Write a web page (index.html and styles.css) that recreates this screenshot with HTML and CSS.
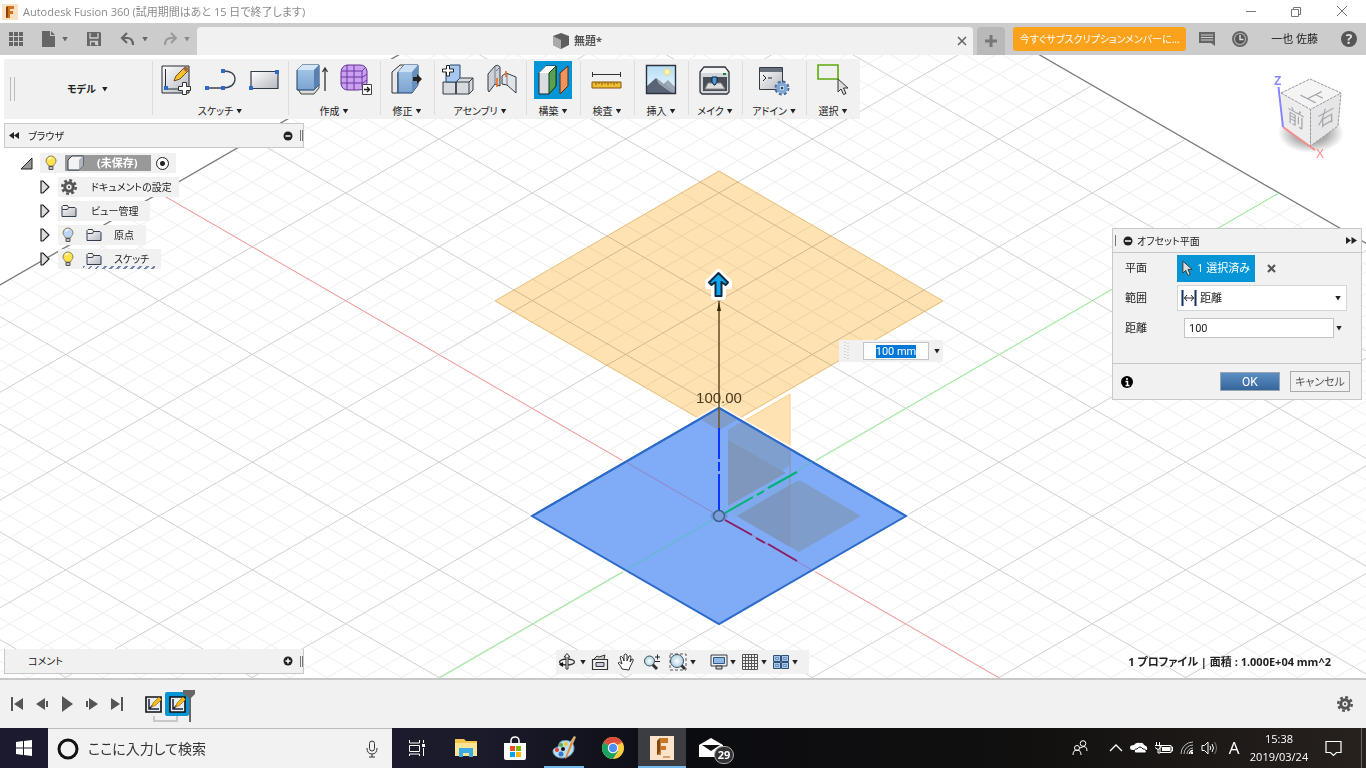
FILE: index.html
```html
<!DOCTYPE html>
<html lang="ja">
  <head>
    <meta charset="UTF-8" />
    <meta name="viewport" content="width=device-width, initial-scale=1.0" />
    <title>Autodesk Fusion 360</title>
    <link rel="stylesheet" href="styles.css">
  </head>

  <body>
    <!-- shared gradients and symbols -->
    <svg class="defs" aria-hidden="true">
      <defs>
        <linearGradient id="gray" x1="0" y1="0" x2="1" y2="1"><stop offset="0" stop-color="#fff" /><stop offset="1" stop-color="#b4b8c0" /></linearGradient>
        <linearGradient id="blue" x1="0" y1="0" x2="0" y2="1"><stop offset="0" stop-color="#a9cbea" /><stop offset="1" stop-color="#7ba3d0" /></linearGradient>
        <linearGradient id="sky" x1="0" y1="0" x2="0" y2="1"><stop offset="0" stop-color="#b5dcf5" /><stop offset="1" stop-color="#eef8fd" /></linearGradient>
        <radialGradient id="lens"><stop offset="0" stop-color="#fff" /><stop offset="1" stop-color="#a8d0e0" /></radialGradient>
        <radialGradient id="shade"><stop offset="0.5" stop-color="#777" stop-opacity="0.6" /><stop offset="1" stop-color="#777" stop-opacity="0" /></radialGradient>
      </defs>
      <symbol id="bulb" viewBox="0 0 12 16">
        <path d="M6 1a5 5 0 0 0-5 5c0 2 2 3 2.500 5h5C9 9 11 8 11 6a5 5 0 0 0-5-5z" fill="currentColor" stroke="#8a8255" />
        <path d="M4 4.500a2.500 2.500 0 0 1 2.500-2" fill="none" stroke="#fff" stroke-width="1.500" />
        <path d="M4 11.500h4v3H4z" fill="#bbb" stroke="#555" />
      </symbol>
      <symbol id="folder" viewBox="0 0 16 14">
        <path d="M1 12.500V2.500l1-1h4.500l1 2H14l1 1v8z" fill="url(#gray)" stroke="#333c4c" />
        <path d="M1.500 5.500h5l1-2" fill="none" stroke="#333c4c" />
      </symbol>
      <symbol id="gear" viewBox="0 0 16 16">
        <circle cx="8" cy="8" r="6.700" fill="none" stroke="currentColor" stroke-width="2.600" stroke-dasharray="2.860 2.400" />
        <circle cx="8" cy="8" r="4.200" fill="none" stroke="currentColor" stroke-width="3" />
        <circle cx="8" cy="8" r="1.200" fill="currentColor" />
      </symbol>
      <symbol id="expand" viewBox="0 0 10 14">
        <path d="M1 1h2l6 6-6 6H1z" fill="#ddd" stroke="#222" stroke-width="1.200" />
      </symbol>
      <symbol id="cursor" viewBox="0 0 12 18">
        <path d="M1 1v13l3-3 2.500 5.500 2.500-1L6.500 10H11z" fill="#ddd" stroke="#333" />
      </symbol>
      <symbol id="feature" viewBox="0 0 17 17">
        <path d="M1 1h15v15H1z" fill="#e4edf8" stroke="#111" stroke-width="1.600" />
        <path d="M4 3v10h10M4 13l4-4" fill="none" stroke="#223" stroke-width="1.500" />
        <path d="M6.500 11l1.500-4 6-6 2.500 2.500-6 6z" fill="#f4b91b" stroke="#a46a08" stroke-width="0.700" />
      </symbol>
    </svg>

    <header class="titlebar">
      <svg class="logo" viewBox="0 0 16 16"><path d="M0 0h16v16H0z" fill="#fbe2c4" /><path d="M4 14V3l2-1h6v3H8v2h3v3H8v4z" fill="#d1731b" /><path d="M4 3l2-1v11l-2 1z" fill="#8e4208" /></svg>
      <h1 class="app-title">Autodesk Fusion 360 (試用期間はあと 15 日で終了します)</h1>
      <div class="window-buttons">
        <button aria-label="最小化"><svg width="12" height="12"><path d="M1 5.500h10" stroke="#777" /></svg></button>
        <button aria-label="元に戻す"><svg width="12" height="12" fill="none" stroke="#777"><path d="M.5 3.500h7v7h-7zM2.500 3V1.500h7v7H8" /></svg></button>
        <button aria-label="閉じる"><svg width="12" height="12"><path d="M0 0l10 10M10 0L0 10" stroke="#777" /></svg></button>
      </div>
    </header>

    <nav class="tabbar">
      <div class="quick">
        <button aria-label="データ"><svg width="16" height="16" fill="#666"><path d="M1 1h4v4H1zM6 1h4v4H6zM11 1h4v4h-4zM1 6h4v4H1zM6 6h4v4H6zM11 6h4v4h-4zM1 11h4v4H1zM6 11h4v4H6zM11 11h4v4h-4z" /></svg></button>
        <button class="quick-file" aria-label="ファイル"><svg width="16" height="18" fill="#666"><path d="M2 1h8v5h5v11H2zM11 1l4 4h-4z" /></svg><i class="caret"></i></button>
        <button class="quick-save" aria-label="保存"><svg width="16" height="16"><path d="M1 1h13l1 1v13H1z" fill="#666" /><path d="M4 2v5h8V2M4.500 14.500v-4h7v4" fill="none" stroke="#ccc" stroke-width="1.300" /><path d="M9 11h2v3H9z" fill="#ccc" /></svg></button>
        <button class="quick-undo" aria-label="元に戻す"><svg width="16" height="16"><path d="M7 2L2 7l5 5M3 7h4q6 0 6 7" fill="none" stroke="#666" stroke-width="2.200" /></svg><i class="caret"></i></button>
        <button class="quick-redo" aria-label="やり直し"><svg width="16" height="16"><path d="M9 2l5 5-5 5M13 7H9q-6 0-6 7" fill="none" stroke="#999" stroke-width="2" /></svg><i class="caret"></i></button>
      </div>
      <div class="tab">
        <svg width="16" height="17"><path d="M0 3l8-3 8 3v9l-8 4-8-4z" fill="#5e5e5e" /><path d="M0 3l8 4v9l-8-4z" fill="#aaa" /></svg>
        <b>無題*</b>
        <button class="tab-close" aria-label="タブを閉じる"><svg width="10" height="10"><path d="M1 1l8 8M9 1L1 9" stroke="#666" stroke-width="1.600" /></svg></button>
      </div>
      <button class="tab-new" aria-label="新規"><svg width="14" height="14"><path d="M7 1v12M1 7h12" stroke="#777" stroke-width="3" /></svg></button>
      <button class="subscribe">今すぐサブスクリプションメンバーに...</button>
      <div class="account">
        <button aria-label="コメント"><svg width="18" height="16"><path d="M1 1h16v14l-4-3H1z" fill="#666" /><path d="M3 4h12M3 6.500h12M3 9h12" stroke="#ccc" /></svg></button>
        <button aria-label="ジョブ"><svg width="16" height="16"><circle cx="8" cy="8" r="7" fill="#bbb" stroke="#666" stroke-width="2" /><circle cx="8" cy="8" r="5" fill="#555" /><path d="M8 4v4.500h3.500" fill="none" stroke="#ddd" stroke-width="1.500" /></svg></button>
        <a href="#" class="user">一也 佐藤</a>
        <button class="help" aria-label="ヘルプ">?</button>
      </div>
    </nav>

    <main class="viewport">
      <svg class="scene" viewBox="0 55 1366 623" preserveAspectRatio="xMidYMid slice">
        <g fill="none">
          <path id="minor" stroke="#eee" />
          <path id="major" stroke="#d0d0d0" />
          <path d="M-400 516L719 -130L1839 516" stroke="#808080" stroke-width="1.300" />
          <path d="M159 193L1200 794" stroke="#ff9c9c" />
          <path d="M1279 193L239 794" stroke="#96f596" />
        </g>

        <!-- offset preview plane -->
        <path class="plane" d="M719 171L943 301L719 430L495 301z" />
        <path d="M728 430L790 394V466L728 502z" fill="#ffe2b1" stroke="#fff" stroke-width="4" />
        <path d="M728 430L790 394V466L728 502z" fill="#ffe2b1" stroke="#f9cf8c" />

        <!-- selected sketch profile -->
        <path d="M532 516L719 408L906 516L719 624z" fill="none" stroke="#fff" stroke-width="6" opacity="0.700" />
        <path d="M532 516L719 408L906 516L719 624z" fill="#76a6f6" fill-opacity="0.930" stroke="#2c6bc9" stroke-width="2" />
        <g clip-path="url(#profile)">
          <path d="M719 300L943 301L719 430L495 301z" fill="#7f9ccb" />
          <path d="M728 430L790 394V464L786 468L728 502z" fill="#7f9fcf" />
          <path d="M728 440L786 473L728 506z" fill="#7e97bb" />
          <path d="M790 476V547L728 512V505z" fill="#7fa5e2" opacity="0.500" />
          <path d="M737 516L795 482Q799 479 803 482L861 516L799 552z" fill="#7f9dca" />
          <path d="M737 516L790 485V547z" fill="#7c98c2" />
          <path d="M790 450V547" stroke="#8794a4" />
        </g>
        <clipPath id="profile"><path d="M534 516L719 409L904 516L719 623z" /></clipPath>
        <path d="M532 516L719 408L906 516" fill="none" stroke="#2c6bc9" stroke-width="2" />
        <path d="M626 462L719 516L812 570" stroke="#9b6fb0" fill="none" opacity="0.600" />
        <path d="M626 570L812 462" stroke="#4ec8b0" opacity="0.700" />
        <path d="M725 520L752 535M756 538L765 543M768 544L797 561" stroke="#8b1c62" stroke-width="2" />
        <path d="M725 513L753 497M757 495L764 491M768 488L797 472" stroke="#00b27a" stroke-width="2" />
        <path d="M719 301V428" stroke="#6f572d" stroke-width="1.600" />
        <path d="M719 428V459M719 462V471M719 474V512" stroke="#0a35ff" stroke-width="2" />
        <path d="M719 302l-2 9h4z" fill="#332200" />
        <circle cx="719" cy="516" r="5.500" fill="#8cb0ee" stroke="#35598f" stroke-width="1.500" />
        <ellipse cx="719" cy="516" rx="9" ry="5" fill="#57749f" opacity="0.300" />
        <text class="dimension" x="719" y="403">100.00</text>
        <path d="M718.500 272L708 282V286H714V297H723V286H729V282z" fill="#fff" stroke="#fff" stroke-width="6" stroke-linejoin="round" />
        <path d="M718.500 273L709 282.500L711.500 285L715.500 282V296H721.500V282L725.500 285L728 282.500z" fill="#0ea5ee" stroke="#102b3c" stroke-width="2" stroke-linejoin="round" />
      </svg>

      <div class="float-left">
        <section class="ribbon">
          <div class="workspace"><span class="grip"></span><button class="menu"><b>モデル</b><i class="caret"></i></button></div>
          <div class="group">
            <div class="tools">
              <button aria-label="スケッチを作成"><svg viewBox="0 0 32 32"><path d="M2 2h27v27H2z" fill="url(#gray)" stroke="#252b35" /><path d="M5.500 5v20H25" fill="none" stroke="#252b35" /><path d="M4 22h4v4H4z" fill="#2a6bd0" /><path d="M14 17l2-5L25 3l3.500 3.500L20 15z" fill="#f5c22d" stroke="#7a4c12" /><path d="M23 5l3-3 3 3-3 3z" fill="#a46b45" /><path d="M22.500 18.500h4v4h4v4h-4v4h-4v-4h-4v-4h4z" fill="#fff" stroke="#333" /></svg></button>
              <button aria-label="線分"><svg viewBox="0 0 32 32"><path d="M3 24h16M19 7c8 0 12 3 12 8s-4 9-12 9" fill="none" stroke="#3b4450" stroke-width="1.300" /><path d="M1 22h4v4H1zM17 22h4v4h-4zM17 5h4v4h-4z" fill="#3068cc" /></svg></button>
              <button aria-label="長方形"><svg viewBox="0 0 32 32"><path d="M3 7.500h27v17H3z" fill="url(#gray)" stroke="#323a48" stroke-width="1.200" /><path d="M1 22h4v4H1zM27 6h4v4h-4z" fill="#3068cc" /></svg></button>
            </div>
            <button class="menu">スケッチ<i class="caret"></i></button>
          </div>
          <div class="group">
            <div class="tools">
              <button aria-label="押し出し"><svg viewBox="0 0 32 32"><path d="M2 25l3 5h13l5-6v-4H2z" fill="#ddd" stroke="#444" /><path d="M1 6l5-5h17v20l-5 5H1z" fill="url(#blue)" stroke="#1c3c66" /><path d="M1 6l5-5h17l-5 5z" fill="#d3e7f7" /><path d="M18 6l5-5v20l-5 5z" fill="#5581b5" /><path d="M29 27V5M26.500 8L29 4l2.500 4" fill="none" stroke="#333" stroke-width="1.300" /></svg></button>
              <button aria-label="フォームを作成"><svg viewBox="0 0 32 32"><path d="M7 1h13q6 0 7 6v11q0 8-9 8H8q-6 0-7-6V9q0-7 6-8z" fill="#c8a1f3" stroke="#653090" /><path d="M2 7h20v16M1 13h22l4-3M1 19h22l4-3M7 1v25M14 1v25M22 7l4-4" fill="none" stroke="#6f35a0" /><path d="M22.500 20.500h9v10h-9z" fill="#fff" stroke="#444" /><path d="M24 25.500h5M27 23l2.500 2.500L27 28" fill="none" stroke="#222" stroke-width="1.400" /></svg></button>
            </div>
            <button class="menu">作成<i class="caret"></i></button>
          </div>
          <div class="group">
            <div class="tools"><button aria-label="プレス/プル"><svg viewBox="0 0 32 32"><path d="M1 8l8-7h4L7 9v20H1z" fill="#e8e8ec" stroke="#333" /><path d="M7 8l6-7h14v20l-6 8H7z" fill="url(#blue)" stroke="#1c3c66" /><path d="M7 8l6-7h14l-6 7z" fill="#cce2f4" /><path d="M21 8l6-7v20l-6 8z" fill="#6890bd" /><path d="M22 13h4v-3l5 5-5 5v-3h-4z" fill="#222" /></svg></button></div>
            <button class="menu">修正<i class="caret"></i></button>
          </div>
          <div class="group">
            <div class="tools">
              <button aria-label="新規コンポーネント"><svg viewBox="0 0 32 32"><path d="M1 18h13v12H1zM14 18l4-4h13v12l-4 4H14z" fill="#d7dade" stroke="#343a44" /><path d="M14 18h13l4-4M27 18v12M14 18v12" fill="none" stroke="#343a44" /><path d="M4 5l4-4h10v13l-4 4H4z" fill="#a7c8ee" stroke="#27456f" /><path d="M4.500 1.500h3v3.500h4v3h-4v4h-3V8h-4V5h4z" fill="#fff" stroke="#222" /></svg></button>
              <button aria-label="ジョイント"><svg viewBox="0 0 32 32"><path d="M2 10l7-8q3-2 5 1v19l-5-2-6 8-1-2z" fill="#cdd1d7" stroke="#343a44" /><path d="M9 3v17M14 3l-4 4" fill="none" stroke="#767d88" /><path d="M16 12l4-3 10 4v16l-9-8-5-1z" fill="#e1e4e8" stroke="#343a44" /><path d="M21 10v11" fill="none" stroke="#767d88" /><path d="M11 14v9M20 7v6" stroke="#f06b16" stroke-width="1.600" /></svg></button>
            </div>
            <button class="menu">アセンブリ<i class="caret"></i></button>
          </div>
          <div class="group">
            <div class="tools"><button class="active" aria-label="オフセット平面"><svg viewBox="0 0 32 32"><path d="M2 9l7-7h10v20l-7 8H2z" fill="#d9dce0" stroke="#222" /><path d="M2 9l7-7h10l-7 7z" fill="#fff" /><path d="M12 9l7-7v20l-7 8z" fill="#58a052" stroke="#143b16" /><path d="M23 9l8-7v20l-8 8z" fill="#ef935f" stroke="#54270c" /></svg></button></div>
            <button class="menu">構築<i class="caret"></i></button>
          </div>
          <div class="group">
            <div class="tools"><button aria-label="計測"><svg viewBox="0 0 32 32"><path d="M1.500 8v5M29.500 8v5M1 10.500h28" stroke="#333" /><path d="M1 18h29v6H1z" fill="#efbd30" stroke="#81570f" /><path d="M5 18v3M8 18v2M11 18v3M14 18v2M17 18v3M20 18v2M23 18v3M26 18v2" stroke="#81570f" /></svg></button></div>
            <button class="menu">検査<i class="caret"></i></button>
          </div>
          <div class="group">
            <div class="tools"><button aria-label="下絵"><svg viewBox="0 0 32 32"><path d="M1.500 1.500h29v28h-29z" fill="url(#sky)" /><circle cx="22" cy="8" r="3" fill="#fff5b0" stroke="#f8db73" /><path d="M14 24l9-8 7 7v6H14z" fill="#9ba9b7" /><path d="M2 22l9-8 19 15H2z" fill="#5b6477" /><path d="M11 14l3 6 13 9h3z" fill="#99a2b1" /><path d="M1.500 1.500h29v28h-29z" fill="none" stroke="#2c3340" stroke-width="1.400" /></svg></button></div>
            <button class="menu">挿入<i class="caret"></i></button>
          </div>
          <div class="group">
            <div class="tools"><button aria-label="3D プリント"><svg viewBox="0 0 32 32"><path d="M1 8l4-5h21l4 5v20l-2 2H3l-2-2z" fill="#d3d6da" stroke="#30353e" stroke-width="1.300" /><path d="M5 4h21l3 5H2z" fill="#f3f3f3" /><path d="M4 13h24v14H4z" fill="#484d56" /><path d="M9 19h13l4 6H6z" fill="#ddd" stroke="#888" /><path d="M13 13h5v5l-2 3h-1l-2-3z" fill="#4c9be0" stroke="#123" /><path d="M24 9h3v2h-3z" fill="#158a21" /></svg></button></div>
            <button class="menu">メイク<i class="caret"></i></button>
          </div>
          <div class="group wide">
            <div class="tools"><button aria-label="スクリプトとアドイン"><svg viewBox="0 0 32 32"><path d="M1.500 3.500h23v22h-23z" fill="url(#gray)" stroke="#343b48" /><path d="M2 4h22v4H2z" fill="#66707d" /><path d="M5 11l3 3-3 3M10 14h4" fill="none" stroke="#222" /><circle cx="24" cy="24" r="6" fill="none" stroke="#486e9f" stroke-width="3" stroke-dasharray="2.700 2" /><circle cx="24" cy="24" r="4" fill="#fff" stroke="#7fa7d4" stroke-width="3.500" /><circle cx="24" cy="24" r="1.500" fill="#23466f" /></svg></button></div>
            <button class="menu">アドイン<i class="caret"></i></button>
          </div>
          <div class="group">
            <div class="tools"><button aria-label="選択"><svg viewBox="0 0 32 32"><path d="M1 1h20v14H1z" fill="none" stroke="#5fa80c" stroke-width="1.600" /><use href="#cursor" x="20" y="14" width="12" height="18" /></svg></button></div>
            <button class="menu">選択<i class="caret"></i></button>
          </div>
        </section>

        <section class="panel-head browser">
          <svg width="11" height="7"><path d="M5 0v7L0 3.500zM10 0v7L5 3.500z" fill="#222" /></svg>
          <h2>ブラウザ</h2>
          <button class="round" aria-label="折りたたむ"><svg width="10" height="10"><circle cx="5" cy="5" r="4.500" fill="#222" /><path d="M2.500 5h5" stroke="#fff" stroke-width="1.500" /></svg></button>
          <span class="grip small"></span>
        </section>

        <ul class="tree">
          <li class="root">
            <svg width="13" height="13"><path d="M1 12L12 1v11z" fill="#999" stroke="#222" /></svg>
            <div class="node">
              <svg class="bulb on"><use href="#bulb" /></svg>
              <span class="document"><svg width="17" height="16"><path d="M1 5l4-4h11v10l-4 4H1z" fill="#f2f3f5" stroke="#333c4c" /><path d="M12 5l4-4v10l-4 4z" fill="#aeb3bc" /></svg><b>(未保存)</b></span>
              <input type="radio" class="activate" aria-label="アクティブ化" checked>
            </div>
          </li>
          <li><svg class="expand"><use href="#expand" /></svg><div class="node settings"><svg class="cog"><use href="#gear" /></svg><span>ドキュメントの設定</span></div></li>
          <li><svg class="expand"><use href="#expand" /></svg><div class="node views"><svg class="folder"><use href="#folder" /></svg><span>ビュー管理</span></div></li>
          <li><svg class="expand"><use href="#expand" /></svg><div class="node nested"><svg class="bulb off"><use href="#bulb" /></svg><svg class="folder"><use href="#folder" /></svg><span>原点</span></div></li>
          <li><svg class="expand"><use href="#expand" /></svg><div class="node nested dashed"><svg class="bulb on"><use href="#bulb" /></svg><svg class="folder"><use href="#folder" /></svg><span>スケッチ</span></div></li>
        </ul>
      </div>

      <svg class="viewcube" viewBox="1268 70 80 92">
        <ellipse cx="1311" cy="133" rx="33" ry="20" fill="url(#shade)" />
        <path d="M1310 79L1341 93L1310.500 109.500L1281 93z" fill="#f4f4f5" />
        <path d="M1281 93L1310.500 109.500V146L1283 127z" fill="#ededee" />
        <path d="M1341 93L1310.500 109.500V146L1338 126z" fill="#e6e6e8" />
        <path d="M1281 93L1310 79L1341 93L1338 126L1310.500 146V109.500M1281 93L1310.500 109.500L1341 93" fill="none" stroke="#999" stroke-dasharray="3 1" />
        <path d="M1278.500 87L1283 127" stroke="#8585ff" stroke-width="2" />
        <path d="M1283 127L1315 150" stroke="#f58d8d" stroke-width="2" />
        <g class="faces">
          <text transform="matrix(0.9 0.45 -0.9 0.45 1308 99)">上</text>
          <text transform="matrix(0.9 0.5 0 1 1296 125)">前</text>
          <text transform="matrix(0.9 -0.5 0 1 1326 124)">右</text>
        </g>
        <text x="1274" y="85" class="axis-z">Z</text>
        <text x="1316" y="158" class="axis-x">X</text>
      </svg>

      <div class="value-box">
        <svg width="5" height="18"><path d="M1 0v18M4 1v18" stroke="#bbb" stroke-dasharray="1 2" /></svg>
        <input type="text" class="value" value="100 mm" aria-label="距離">
        <button aria-label="候補"><i class="caret"></i></button>
      </div>

      <form class="dialog">
        <header>
          <span class="grip small"></span>
          <svg width="10" height="10"><circle cx="5" cy="5" r="4.500" fill="#222" /><path d="M2 5h6" stroke="#fff" stroke-width="1.500" /></svg>
          <h2>オフセット平面</h2>
          <svg class="skip" width="11" height="7"><path d="M0 0v7l5-3.500zM5.500 0v7L11 3.500z" fill="#222" /></svg>
        </header>
        <div class="fields">
          <div class="field">
            <label for="plane">平面</label>
            <button type="button" id="plane" class="picked"><svg width="11" height="17"><use href="#cursor" /></svg>1 選択済み</button>
            <button type="button" aria-label="クリア" class="clear"><svg width="9" height="9"><path d="M1 1l7 7M8 1L1 8" stroke="#555" stroke-width="2.200" /></svg></button>
          </div>
          <div class="field">
            <label for="extent">範囲</label>
            <div class="select">
              <svg width="16" height="16"><path d="M1.500 0v16M14.500 0v16" stroke="#13305e" stroke-width="2" /><path d="M3 8h10M6 5L3.500 8 6 11M10 5l2.500 3L10 11" fill="none" stroke="#222" /></svg>
              <select id="extent"><option>距離</option></select>
              <i class="caret"></i>
            </div>
          </div>
          <div class="field">
            <label for="distance">距離</label>
            <input type="text" id="distance" value="100">
            <i class="caret"></i>
          </div>
        </div>
        <footer>
          <svg width="12" height="12"><circle cx="6" cy="6" r="6" /><path d="M6 2v2M4.500 5.500H6.500V9M4.500 9.500h4" stroke="#fff" stroke-width="1.500" fill="none" /></svg>
          <button type="button" class="ok">OK</button>
          <button type="button" class="cancel">キャンセル</button>
        </footer>
      </form>

      <section class="panel-head comments">
        <h2>コメント</h2>
        <button class="round" aria-label="展開"><svg width="10" height="10"><circle cx="5" cy="5" r="4.500" fill="#222" /><path d="M2.500 5h5M5 2.500v5" stroke="#fff" stroke-width="1.500" /></svg></button>
        <span class="grip small"></span>
      </section>

      <div class="navbar">
        <button class="orbit" aria-label="オービット"><svg viewBox="0 0 18 18"><ellipse cx="9" cy="9" rx="7.500" ry="3" fill="none" stroke="#333" stroke-width="1.300" /><path d="M8 16V4H6l3-3.500L12 4h-2v12z" fill="#eee" stroke="#333" /><path d="M5 9v5l-4-2.500z" fill="#111" /></svg><i class="caret"></i></button>
        <button aria-label="ビュー正面"><svg viewBox="0 0 18 18"><path d="M1.500 6.500h15v10h-15z" fill="#f1f1f1" stroke="#333" stroke-width="1.200" /><path d="M3 6l3-3 2 1 6-2-1 4" fill="#ccc" stroke="#333" /><path d="M5 9.500h8v4H5z" fill="#ccd" stroke="#333" /></svg></button>
        <button aria-label="画面移動"><svg viewBox="0 0 18 18"><path d="M5 16q-1-3-4-6 1-2 4 1L3 4q1-2 3 1l1 3V2q2-2 3 0v6l2-5q2-1 2 1l-1 5 2-3q2 0 1 2l-3 6-1 3z" fill="#fff" stroke="#333" /></svg></button>
        <button aria-label="ズーム"><svg viewBox="0 0 18 18"><path d="M9 11l5 5" stroke="#333" stroke-width="3" /><circle cx="6.500" cy="8" r="5" fill="url(#lens)" stroke="#40505c" /><path d="M12 4h5M14.500 1.500v5M12 8.500h5" stroke="#222" /></svg></button>
        <button class="gap" aria-label="窓ズーム"><svg viewBox="0 0 18 18"><path d="M1 1h16v16H1z" fill="none" stroke="#555" stroke-dasharray="3 2" /><path d="M12 12l4 4" stroke="#333" stroke-width="3" /><circle cx="8" cy="8" r="6.500" fill="url(#lens)" stroke="#40505c" /></svg><i class="caret"></i></button>
        <button aria-label="表示設定"><svg viewBox="0 0 18 18"><path d="M1 2h16v11H1z" fill="#eee" stroke="#333c4c" /><path d="M3.500 4.500h11v6h-11z" fill="#92b8e6" stroke="#2f5788" /><path d="M6 13h6v3H6z" fill="#ccc" stroke="#333" /></svg><i class="caret"></i></button>
        <button aria-label="グリッド"><svg viewBox="0 0 18 18"><path d="M1.500 1.500h15v15h-15zM4.500 1v15M7.500 1v15M10.500 1v15M13.500 1v15M1 4.500h15M1 7.500h15M1 10.500h15M1 13.500h15" fill="none" stroke="#555" /></svg><i class="caret"></i></button>
        <button aria-label="ビューポート"><svg viewBox="0 0 18 18" fill="#a9c8ee" stroke="#2f5178"><path d="M1.500 2.500h7v6h-7zM9.500 2.500h7v6h-7zM1.500 9.500h7v6h-7zM9.500 9.500h7v6h-7z" /><path d="M3.500 4.500h3v2h-3zM11.500 4.500h3v2h-3zM3.500 11.500h3v2h-3zM11.500 11.500h3v2h-3z" stroke="#6a8fc0" /></svg><i class="caret"></i></button>
      </div>

      <p class="status">1 プロファイル | 面積 : 1.000E+04 mm^2</p>
    </main>

    <section class="timeline">
      <div class="playback">
        <button aria-label="先頭"><svg width="14" height="16"><path d="M1 1h2v14H1zM13 2v12L4 8z" fill="#555" /></svg></button>
        <button aria-label="前へ"><svg width="14" height="16"><path d="M10 2v12L1 8zM11 5h2v6h-2z" fill="#555" /></svg></button>
        <button aria-label="再生"><svg width="14" height="16"><path d="M2 0v16l11-8z" fill="#555" /></svg></button>
        <button aria-label="次へ"><svg width="14" height="16"><path d="M4 2v12l9-6zM1 5h2v6H1z" fill="#555" /></svg></button>
        <button aria-label="末尾"><svg width="14" height="16"><path d="M1 2v12l9-6zM11 1h2v14h-2z" fill="#555" /></svg></button>
      </div>
      <div class="features">
        <button aria-label="スケッチ1"><svg width="17" height="17"><use href="#feature" /></svg></button>
        <button class="current" aria-label="スケッチ2"><svg width="17" height="17"><use href="#feature" /></svg></button>
        <svg class="marker" width="13" height="32"><path d="M0 0h12v4L8 8v24H6V8L0 4z" fill="#666" /></svg>
        <span class="link"></span>
      </div>
      <button class="timeline-settings" aria-label="設定"><svg class="cog"><use href="#gear" /></svg></button>
    </section>

    <footer class="taskbar">
      <button class="start" aria-label="スタート"><svg width="16" height="16" fill="#fff"><path d="M0 2l7-1v6.500H0zM8 1l8-1v7.500H8zM0 8.500h7V15l-7-1zM8 8.500h8V16l-8-1z" /></svg></button>
      <div class="search">
        <svg width="22" height="22"><circle cx="11" cy="11" r="9" fill="none" stroke="#111" stroke-width="3" /></svg>
        <input type="text" placeholder="ここに入力して検索" aria-label="検索">
        <svg width="12" height="18"><path d="M6 1q2.500 0 2.500 2.500v5Q8.500 11 6 11T3.500 8.500v-5Q3.500 1 6 1zM1 8q0 6 5 6t5-6M6 14v3M3 17h6" fill="none" stroke="#333" /></svg>
      </div>
      <div class="apps">
        <button aria-label="タスクビュー"><svg width="18" height="16" fill="none" stroke="#fff"><path d="M1.500 0v3h10V0M1.500 5.500h10v6h-10zM1.500 16v-2h10v2M15.500 0v3M15.500 8v8" /><path d="M14 4h3v3h-3z" fill="#fff" stroke="none" /></svg></button>
        <button aria-label="エクスプローラー"><svg width="22" height="20"><path d="M0 1h9l2 2h11v14H0z" fill="#f4c54c" /><path d="M0 5h22v13H0z" fill="#ffe593" /><path d="M4 19v-9h14v9h-4v-4H8v4z" fill="#3aabe6" /></svg></button>
        <button aria-label="ストア"><svg width="24" height="24"><path d="M8 7V5q0-4 4-4t4 4v2" fill="none" stroke="#fff" stroke-width="1.500" /><path d="M1 7h22v15q0 2-2 2H3q-2 0-2-2z" fill="#fff" /><path d="M7 10h5v5H7z" fill="#f25022" /><path d="M13 10h5v5h-5z" fill="#7fba00" /><path d="M7 16h5v5H7z" fill="#00a4ef" /><path d="M13 16h5v5h-5z" fill="#ffb900" /></svg></button>
        <button class="running" aria-label="ペイント"><svg width="24" height="24"><path d="M10 5c7-2 12 2 12 7 0 6-6 10-12 10-5 0-9-3-9-7 0-3 3-3 5-4 1-2 1-5 4-6z" fill="#b9def0" stroke="#6e9db6" /><circle cx="5" cy="14" r="2" fill="#e63b31" /><circle cx="9" cy="9" r="2" fill="#5aa840" /><circle cx="14" cy="8" r="2" fill="#f2c42f" /><circle cx="9" cy="18" r="2.500" fill="#3577d0" /><circle cx="11" cy="13" r="2" fill="#111" /><path d="M13 22l6-16 2 1-7 16z" fill="#e3872a" /><path d="M18 6l4-6 2 1-3 7z" fill="#d6b07c" /></svg></button>
        <button aria-label="Chrome"><svg width="24" height="24"><circle cx="12" cy="12" r="11" fill="#ffcd40" /><path d="M12 12L2.500 6.500A11 11 0 0 1 21.500 6.500H12z" fill="#dc4b3e" /><path d="M2.500 6.500A11 11 0 0 0 12 23l5-8-5-3z" fill="#1ba160" /><path d="M21.500 6.500H12v4z" fill="#dc4b3e" /><circle cx="12" cy="12" r="5.200" fill="#fff" /><circle cx="12" cy="12" r="4.200" fill="#4d8ff5" /></svg></button>
        <button class="running open" aria-label="Fusion 360"><svg width="24" height="24"><path d="M0 0h24v24H0z" fill="#fce3cc" /><path d="M7 19V5l3-3h8v5h-7v3h5v4h-5v5z" fill="#c97729" /><path d="M7 5l3-3v14l-3 3z" fill="#85480f" /><path d="M13 21h7" stroke="#d9a06c" stroke-width="2" /></svg></button>
        <button class="mail" aria-label="メール"><svg width="24" height="20"><path d="M0 7l12-7 12 7v12H0z" fill="#fff" /><path d="M3 7h18l-9 6z" fill="#111" /></svg><span class="count">29</span></button>
      </div>
      <div class="tray">
        <button aria-label="People"><svg width="16" height="16" fill="none" stroke="#fff"><circle cx="11" cy="3.500" r="2.800" /><circle cx="5" cy="8" r="2.500" /><path d="M1 15q0-5 4-5t4 5M8 8q7-4 7 3" /></svg></button>
        <button class="more" aria-label="隠れているインジケーター"><svg width="14" height="8"><path d="M1 7l6-6 6 6" fill="none" stroke="#fff" stroke-width="1.300" /></svg></button>
        <button aria-label="OneDrive"><svg width="18" height="12"><path d="M3 8Q0 8 0 5.500T4 3q2-3 6-2 3-1 4 2 4 1 3 5z" fill="#fff" /><path d="M5 11q-2-4 2-4 3-4 6 0 4 0 3 4z" fill="#fff" stroke="#111" /></svg></button>
        <button aria-label="電源"><svg width="18" height="12"><path d="M5 3.500h11v7H5zM16 5h1.500v4H16" fill="none" stroke="#fff" /><path d="M7 5h8v4H7z" fill="#fff" /><path d="M1.500 0v3M4.500 0v3M0 3.500h6v2L3 7.500 0 5.500M3 7v4h2" fill="none" stroke="#fff" /></svg></button>
        <button aria-label="ネットワーク"><svg width="14" height="14" fill="none"><path d="M1 13A12 12 0 0 1 13 1M4 13a9 9 0 0 1 9-9M7 13a6 6 0 0 1 6-6" stroke="#bbb" /><path d="M9.500 13a3.500 3.500 0 0 1 3.500-3.500" stroke="#fff" stroke-width="1.500" /><path d="M11 11h2v2h-2z" fill="#fff" /></svg></button>
        <button aria-label="音量"><svg width="18" height="14" fill="none" stroke="#fff"><path d="M1 4.500h2.500L7 1v12L3.500 9.500H1zM9 5q1.500 2 0 4M11 3q3 4 0 8" /><path d="M13.500 1q4 6 0 12" stroke="#777" /></svg></button>
        <button class="ime">A</button>
        <button class="clock"><time>15:38</time><time>2019/03/24</time></button>
        <button class="notice" aria-label="通知"><svg width="18" height="17"><path d="M1 1.500h15v11h-4.500L8.500 15.500l-3-3H1z" fill="none" stroke="#fff" stroke-width="1.200" /></svg></button>
      </div>
    </footer>

    <!-- JS -->
    <script>
      // isometric ground grid, 10 mm cells with a heavier line every 50 mm
      const cells = 30;
      const stepX = 18.667;
      const stepY = 10.77;
      const w = cells * stepX;
      const h = cells * stepY;
      let minor = '';
      let major = '';

      for (let i = -cells; i <= cells; i++) {
        const left = 719 + i * stepX;
        const right = 719 - i * stepX;
        const y = 516 + i * stepY;
        const lines =
          `M${left - w} ${y + h}L${left + w} ${y - h}` +
          `M${right - w} ${y - h}L${right + w} ${y + h}`;

        if (i % 5 === 0) major += lines;
        else minor += lines;
      }

      document.querySelector('#minor').setAttribute('d', minor);
      document.querySelector('#major').setAttribute('d', major);

      const value = document.querySelector('.value');
      value.focus();
      value.select();
    </script>
  </body>
</html>
```
FILE: styles.css
```css
* {
  margin: 0;
  padding: 0;
  box-sizing: border-box;
}
body {
  display: flex;
  flex-direction: column;
  height: 100vh;
  overflow: hidden;
  background: #f1f1f1;
  color: #222;
  font-family: "Open Sans", "Noto Sans CJK JP", sans-serif;
  font-size: 11px;
  font-feature-settings: "palt";
  line-height: 16px;
}
button,
input,
select {
  border: none;
  outline: none;
  background: none;
  color: inherit;
  font: inherit;
  font-feature-settings: inherit;
}
button {
  display: flex;
  align-items: center;
  justify-content: center;
}
h1,
h2 {
  font-size: 10px;
  font-weight: normal;
}
a {
  color: inherit;
  text-decoration: none;
}
svg {
  display: block;
  flex-shrink: 0;
}
.defs {
  position: absolute;
  width: 0;
  height: 0;
}
.caret {
  flex-shrink: 0;
  width: 6px;
  height: 5px;
  background: currentColor;
  clip-path: polygon(0 0, 100% 0, 50% 100%);
}
.grip {
  width: 5px;
  height: 24px;
  border: solid #bbb;
  border-width: 0 1px;
}
.grip.small {
  width: 3px;
  height: 11px;
  border-color: #777;
}

/* title bar */
.titlebar {
  display: flex;
  align-items: center;
  gap: 5px;
  height: 23px;
  padding-left: 2px;
  background: #fff;
}
.logo {
  width: 16px;
  height: 16px;
}
.app-title {
  color: #8a8a8a;
  font-size: 11px;
}
.window-buttons {
  display: flex;
  margin-left: auto;
}
.window-buttons button {
  width: 46px;
  height: 23px;
}

/* tabs */
.tabbar {
  display: flex;
  align-items: flex-end;
  height: 32px;
  background: #ccc;
}
.quick {
  display: flex;
  align-items: center;
  gap: 18px;
  width: 197px;
  height: 32px;
  padding-left: 8px;
  color: #666;
}
.quick button {
  gap: 6px;
}
.quick .quick-file {
  margin-left: -2px;
}
.quick .quick-undo {
  margin-right: -4px;
}
.quick .quick-redo {
  color: #888;
}
.tab {
  display: flex;
  flex: 1;
  align-items: center;
  justify-content: center;
  gap: 5px;
  height: 28px;
  padding: 0 6px;
  border-radius: 4px 4px 0 0;
  background: #f1f1f1;
  color: #555;
}
.tab svg:first-child {
  margin-left: auto;
}
.tab-close {
  margin-left: auto;
}
.tab-new {
  width: 28px;
  height: 28px;
  margin-left: 4px;
  border-radius: 4px 4px 0 0;
  background: #b9b9b9;
}
.subscribe {
  width: 173px;
  height: 24px;
  margin: 0 12px 4px 8px;
  border-radius: 3px;
  background: #faa21b;
  color: #fff;
  font-size: 10px;
  white-space: nowrap;
}
.account {
  display: flex;
  align-items: center;
  gap: 16px;
  height: 32px;
  padding-right: 9px;
}
.user {
  margin: 0 7px;
}
.help {
  width: 16px;
  height: 16px;
  border-radius: 50%;
  background: #555;
  color: #ddd;
  font-size: 14px;
  font-weight: bold;
}

/* canvas */
.viewport {
  position: relative;
  flex: 1;
  overflow: hidden;
  background: #fff;
}
.scene {
  position: absolute;
  width: 100%;
  height: 100%;
}
.plane {
  fill: #ffe2b1;
  stroke: #f7cb83;
  mix-blend-mode: multiply;
}
.dimension {
  fill: #4b3b1e;
  font-family: "Liberation Sans", sans-serif;
  font-size: 15px;
  text-anchor: middle;
}
.float-left {
  position: absolute;
  top: 4px;
  left: 4px;
}

/* ribbon */
.ribbon {
  display: flex;
  height: 60px;
  background: #f1f1f1;
}
.workspace {
  display: flex;
  align-items: center;
  width: 148px;
  padding-left: 6px;
}
.workspace .menu {
  flex: 1;
  gap: 6px;
  padding-left: 8px;
}
.menu {
  gap: 3px;
  height: 20px;
  font-size: 10px;
  white-space: nowrap;
}
.group {
  display: flex;
  flex-direction: column;
  align-items: center;
  min-width: 54px;
  padding: 2px 5px 0;
  background: linear-gradient(#ddd, #ddd) 0 2px / 1px 54px no-repeat;
}
.group .menu {
  padding-top: 4px;
}
.group.wide {
  min-width: 64px;
}
.tools {
  display: flex;
  gap: 6px;
}
.tools button {
  width: 38px;
  height: 38px;
}
.tools svg {
  width: 32px;
  height: 32px;
  overflow: visible;
}
.tools .active {
  background: #0696d7;
}

/* side panels */
.panel-head {
  display: flex;
  align-items: center;
  width: 300px;
  height: 25px;
  padding: 0 0 0 4px;
  border: 1px solid #c8c8c8;
  background: #f1f1f1;
}
.panel-head h2 {
  margin-left: 8px;
}
.panel-head .round {
  margin: 0 7px 0 auto;
}
.browser {
  margin-top: 4px;
}
.comments {
  position: absolute;
  bottom: 4px;
  left: 4px;
  padding-left: 15px;
  border-top: none;
}

/* browser tree */
.tree {
  padding-top: 5px;
  font-size: 10px;
  list-style: none;
}
.tree li {
  display: flex;
  align-items: center;
  gap: 8px;
  height: 20px;
  margin-bottom: 4px;
  padding-left: 36px;
}
.tree .root {
  gap: 7px;
  padding-left: 16px;
  font-size: 11px;
}
.node {
  display: flex;
  align-items: center;
  gap: 14px;
  height: 20px;
  padding: 0 7px 0 3px;
  background: #f1f1f1;
}
.root .node {
  gap: 5px;
  padding-left: 5px;
}
.document {
  display: flex;
  align-items: center;
  gap: 13px;
  width: 86px;
  height: 16px;
  margin-left: 3px;
  padding-left: 2px;
  background: #999;
  color: #fff;
}
.node.views {
  padding-right: 12px;
}
.node.nested {
  gap: 12px;
  padding: 0 12px 0 4px;
}
.expand {
  width: 10px;
  height: 14px;
}
.bulb {
  width: 12px;
  height: 16px;
}
.bulb.on {
  color: #ffe34d;
}
.bulb.off {
  color: #bcd3fa;
}
.folder {
  width: 16px;
  height: 14px;
}
.cog {
  width: 16px;
  height: 16px;
  color: #555;
}
.dashed {
  background: repeating-linear-gradient(135deg, #7287b0 0 2px, #f1f1f1 2px 5px) 25px 100% / 72px 3px no-repeat, #f1f1f1;
}
.activate {
  width: 13px;
  height: 13px;
  border: 1px solid #222;
  border-radius: 50%;
  background: radial-gradient(#222 0 2px, #fff 3px);
  appearance: none;
}

/* view cube */
.viewcube {
  position: absolute;
  top: 15px;
  right: 18px;
  width: 80px;
  height: 92px;
  font-family: "Liberation Sans", "Noto Sans CJK JP", sans-serif;
}
.faces {
  fill: #a5a8ae;
  font-size: 19px;
  text-anchor: middle;
}
.axis-z {
  fill: #8585ff;
  font-size: 12px;
  font-weight: bold;
}
.axis-x {
  fill: #ff8585;
  font-size: 12px;
}

/* value box beside the manipulator */
.value-box {
  position: absolute;
  top: 285px;
  left: calc(50% + 156px);
  display: flex;
  align-items: center;
  width: 104px;
  height: 22px;
  padding-left: 5px;
  background: #f1f1f1;
}
.value {
  width: 66px;
  height: 18px;
  margin: 0 5px 0 14px;
  border: 1px solid #c4c4c4;
  background: #fff;
  font-family: Roboto, sans-serif;
  text-align: center;
}
.value::selection {
  background: #0078d7;
  color: #fff;
}

/* offset plane dialog */
.dialog {
  position: absolute;
  top: 173px;
  right: 4px;
  width: 250px;
  border: 1px solid #c8c8c8;
  background: #f1f1f1;
}
.dialog header {
  display: flex;
  align-items: center;
  gap: 4px;
  height: 24px;
  padding: 0 4px 0 0;
  border-bottom: 1px solid #c8c8c8;
}
.dialog header .small {
  margin-right: 3px;
  border-left: none;
}
.skip {
  margin-left: auto;
}
.fields {
  height: 110px;
}
.field {
  display: flex;
  align-items: center;
  height: 30px;
  padding-left: 12px;
}
.field label {
  width: 52px;
}
.picked {
  gap: 4px;
  width: 78px;
  height: 27px;
  background: #0696d7;
  color: #fff;
}
.clear {
  margin-left: 12px;
}
.select {
  display: flex;
  align-items: center;
  width: 170px;
  height: 26px;
  padding: 0 5px 0 3px;
  border: 1px solid #d5d5d5;
  background: #fff;
}
.select select {
  flex: 1;
  padding-left: 3px;
  appearance: none;
}
#distance {
  width: 150px;
  height: 20px;
  margin: 0 2px 0 7px;
  padding-left: 4px;
  border: 1px solid #c4c4c4;
  background: #fff;
  font-family: Roboto, sans-serif;
}
.dialog footer {
  display: flex;
  align-items: center;
  height: 36px;
  padding: 0 11px 0 8px;
  border-top: 1px solid #c8c8c8;
}
.ok {
  width: 60px;
  height: 19px;
  margin: 0 10px 0 auto;
  border: 1px solid #9aa5b2;
  background: linear-gradient(#5b8fc4, #36659b);
  color: #fff;
  font-family: Roboto, sans-serif;
  font-size: 12px;
}
.cancel {
  width: 60px;
  height: 21px;
  border: 1px solid #aaa;
  color: #555;
}

/* navigation bar */
.navbar {
  position: absolute;
  bottom: 4px;
  left: calc(50% - 127px);
  display: flex;
  align-items: center;
  gap: 8px;
  width: 253px;
  height: 24px;
  padding-left: 2px;
  background: #f1f1f1;
}
.navbar button {
  gap: 3px;
}
.navbar .orbit {
  gap: 4px;
  margin-right: -3px;
}
.navbar button:nth-child(n + 6) {
  gap: 2px;
  margin-right: -3px;
}
.navbar button.gap {
  margin-right: 6px;
}
.navbar svg {
  width: 18px;
  height: 18px;
}
.status {
  position: absolute;
  right: 35px;
  bottom: 8px;
  font-weight: bold;
}

/* timeline */
.timeline {
  display: flex;
  align-items: center;
  height: 50px;
  padding: 0 13px 0 10px;
  border-top: 2px solid #c8c8c8;
}
.playback {
  display: flex;
  gap: 11px;
}
.features {
  position: relative;
  display: flex;
  margin-left: 17px;
}
.features button {
  width: 24px;
  height: 24px;
}
.features .current {
  border-radius: 2px;
  background: #0696d7;
}
.marker {
  position: absolute;
  top: -2px;
  left: 42px;
}
.link {
  position: absolute;
  top: 24px;
  left: 12px;
  width: 25px;
  height: 6px;
  border: 2px solid #c8c8c8;
  border-top: none;
}
.timeline-settings {
  margin-left: auto;
}

/* windows taskbar */
.taskbar {
  display: flex;
  height: 40px;
  background: linear-gradient(90deg, #1b1a2e, #1c1b2c 35%, #0b0c11 50%, #11100f 75%, #28211e);
  color: #fff;
}
.start {
  width: 48px;
}
.search {
  display: flex;
  align-items: center;
  gap: 9px;
  width: 344px;
  padding: 0 14px 0 9px;
  border-top: 1px solid #bbb;
  background: #f2f2f2;
}
.search input {
  flex: 1;
  font-size: 14px;
}
.search input::placeholder {
  color: #333;
}
.apps {
  display: flex;
  gap: 1px;
  padding-left: 1px;
}
.apps button {
  position: relative;
  width: 48px;
}
.running {
  background: linear-gradient(#76b9ed, #76b9ed) 50% 100% / 40px 2px no-repeat;
}
.open {
  background-color: #3c3c43;
  background-size: 48px 2px;
}
.count {
  position: absolute;
  top: 18px;
  left: 27px;
  width: 20px;
  height: 18px;
  border: 1px solid #aaa;
  border-radius: 9px;
  background: #333;
  font-weight: bold;
  text-align: center;
}
.tray {
  display: flex;
  align-items: center;
  gap: 7px;
  margin-left: auto;
  padding-right: 4px;
}
.tray .more {
  margin-left: 14px;
}
.ime {
  width: 16px;
  font-size: 17px;
}
.clock {
  flex-direction: column;
  width: 60px;
  line-height: 18px;
}
.notice {
  width: 53px;
  height: 40px;
  margin-left: -7px;
  padding-right: 3px;
  border-right: 1px solid #666;
}
```
